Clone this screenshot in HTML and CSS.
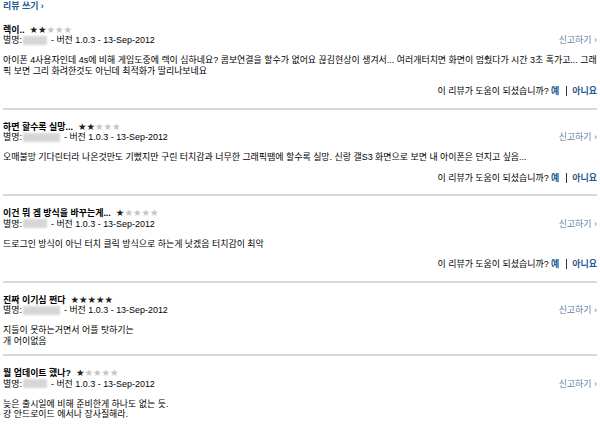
FILE: index.html
```html
<!DOCTYPE html>
<html lang="ko">
<head>
<meta charset="utf-8">
<title>리뷰</title>
<link rel="stylesheet" href="styles.css">
</head>
<body>
<div class="page">
  <div class="head"><a class="write">리뷰 쓰기 ›</a></div>

  <div class="review first">
    <div class="title"><b>렉이..</b><span class="stars"><span class="on">★★</span><span class="off">★★★</span></span></div>
    <div class="meta"><span class="who">별명:<span class="nick n-short"></span>- 버전 1.0.3 - 13-Sep-2012</span><a class="report">신고하기 ›</a></div>
    <p class="text">아이폰 4사용자인데 4s에 비해 게임도중에 렉이 심하네요? 콤보연결을 할수가 없어요 끊김현상이 생겨서... 여러개터치면 화면이 멈췄다가 시간 3초 혹가고... 그래픽 보면 그리 화려한것도 아닌데 최적화가 딸리나보네요</p>
    <div class="helpful">이 리뷰가 도움이 되셨습니까? <a class="vote">예</a><span class="bar"></span><a class="vote">아니요</a></div>
  </div>

  <div class="review">
    <div class="title"><b>하면 할수록 실망...</b><span class="stars"><span class="on">★★</span><span class="off">★★★</span></span></div>
    <div class="meta"><span class="who">별명:<span class="nick n-long"></span>- 버전 1.0.3 - 13-Sep-2012</span><a class="report">신고하기 ›</a></div>
    <p class="text">오매불망 기다린터라 나온것만도 기뻤지만 구린 터치감과 너무한 그래픽땜에 할수록 실망. 신랑 갤S3 화면으로 보면 내 아이폰은 던지고 싶음...</p>
    <div class="helpful">이 리뷰가 도움이 되셨습니까? <a class="vote">예</a><span class="bar"></span><a class="vote">아니요</a></div>
  </div>

  <div class="review">
    <div class="title"><b>이건 뭐 겜 방식을 바꾸는게...</b><span class="stars"><span class="on">★</span><span class="off">★★★★</span></span></div>
    <div class="meta"><span class="who">별명:<span class="nick n-short"></span>- 버전 1.0.3 - 13-Sep-2012</span><a class="report">신고하기 ›</a></div>
    <p class="text">드로그인 방식이 아닌 터치 클릭 방식으로 하는게 낫겠음 터치감이 최악</p>
    <div class="helpful">이 리뷰가 도움이 되셨습니까? <a class="vote">예</a><span class="bar"></span><a class="vote">아니요</a></div>
  </div>

  <div class="review">
    <div class="title"><b>진짜 이기심 쩐다</b><span class="stars"><span class="on">★★★★★</span></span></div>
    <div class="meta"><span class="who">별명:<span class="nick n-long"></span>- 버전 1.0.3 - 13-Sep-2012</span><a class="report">신고하기 ›</a></div>
    <p class="text">지들이 못하는거면서 어플 탓하기는<br>개 어이없음</p>
  </div>

  <div class="review last">
    <div class="title"><b>뭘 업데이트 했나?</b><span class="stars"><span class="on">★</span><span class="off">★★★★</span></span></div>
    <div class="meta"><span class="who">별명:<span class="nick n-short"></span>- 버전 1.0.3 - 13-Sep-2012</span><a class="report">신고하기 ›</a></div>
    <p class="text">늦은 출시일에 비해 준비한게 하나도 없는 듯.<br>걍 안드로이드 에서나 장사질해라.</p>
  </div>
</div>
</body>
</html>
```

FILE: styles.css
```css
html, body {
  margin: 0;
  padding: 0;
  background: #ffffff;
}

body {
  font-family: "Liberation Sans", "Noto Sans CJK KR", sans-serif;
  font-size: 8.95px;
  line-height: 10.5px;
  color: #000;
}

.page {
  width: 594px;
  padding: 1px 3px 0 3px;
}

.head {
  height: 10.5px;
}

.write {
  color: #245a90;
  font-weight: bold;
}

.review {
  padding: 12px 0 8px 0;
  border-bottom: 2px solid #dadada;
}

.review.first {
  padding-top: 13px;
}

.review.last {
  border-bottom: none;
}

.title {
  display: flex;
  align-items: center;
  gap: 5px;
  color: #000;
}

.title b {
  font-weight: bold;
}

.stars {
  font-family: "DejaVu Sans", sans-serif;
  font-size: 9.5px;
  line-height: 10.5px;
}

.stars .on {
  color: #1e1e1e;
}

.stars .off {
  color: #c4c4c4;
}

.meta {
  display: flex;
  justify-content: space-between;
  align-items: center;
}

.who {
  display: flex;
  align-items: center;
}

.nick {
  display: inline-block;
  height: 9px;
  margin: 0 4px 0 1px;
  background: #d6d6d6;
  filter: blur(0.8px);
}

.nick.n-short {
  width: 24px;
}

.nick.n-long {
  width: 37px;
}

.report {
  color: #5f7f9f;
}

.text {
  margin: 9.5px 0 0 0;
  word-break: break-all;
  color: #000;
}

.helpful {
  display: flex;
  justify-content: flex-end;
  align-items: center;
  margin-top: 10px;
  margin-bottom: 3px;
  white-space: pre;
}

.vote {
  color: #245a90;
  font-weight: bold;
}

.bar {
  display: inline-block;
  width: 1px;
  height: 10px;
  background: #333;
  margin: 0 5px 0 7px;
}
```
